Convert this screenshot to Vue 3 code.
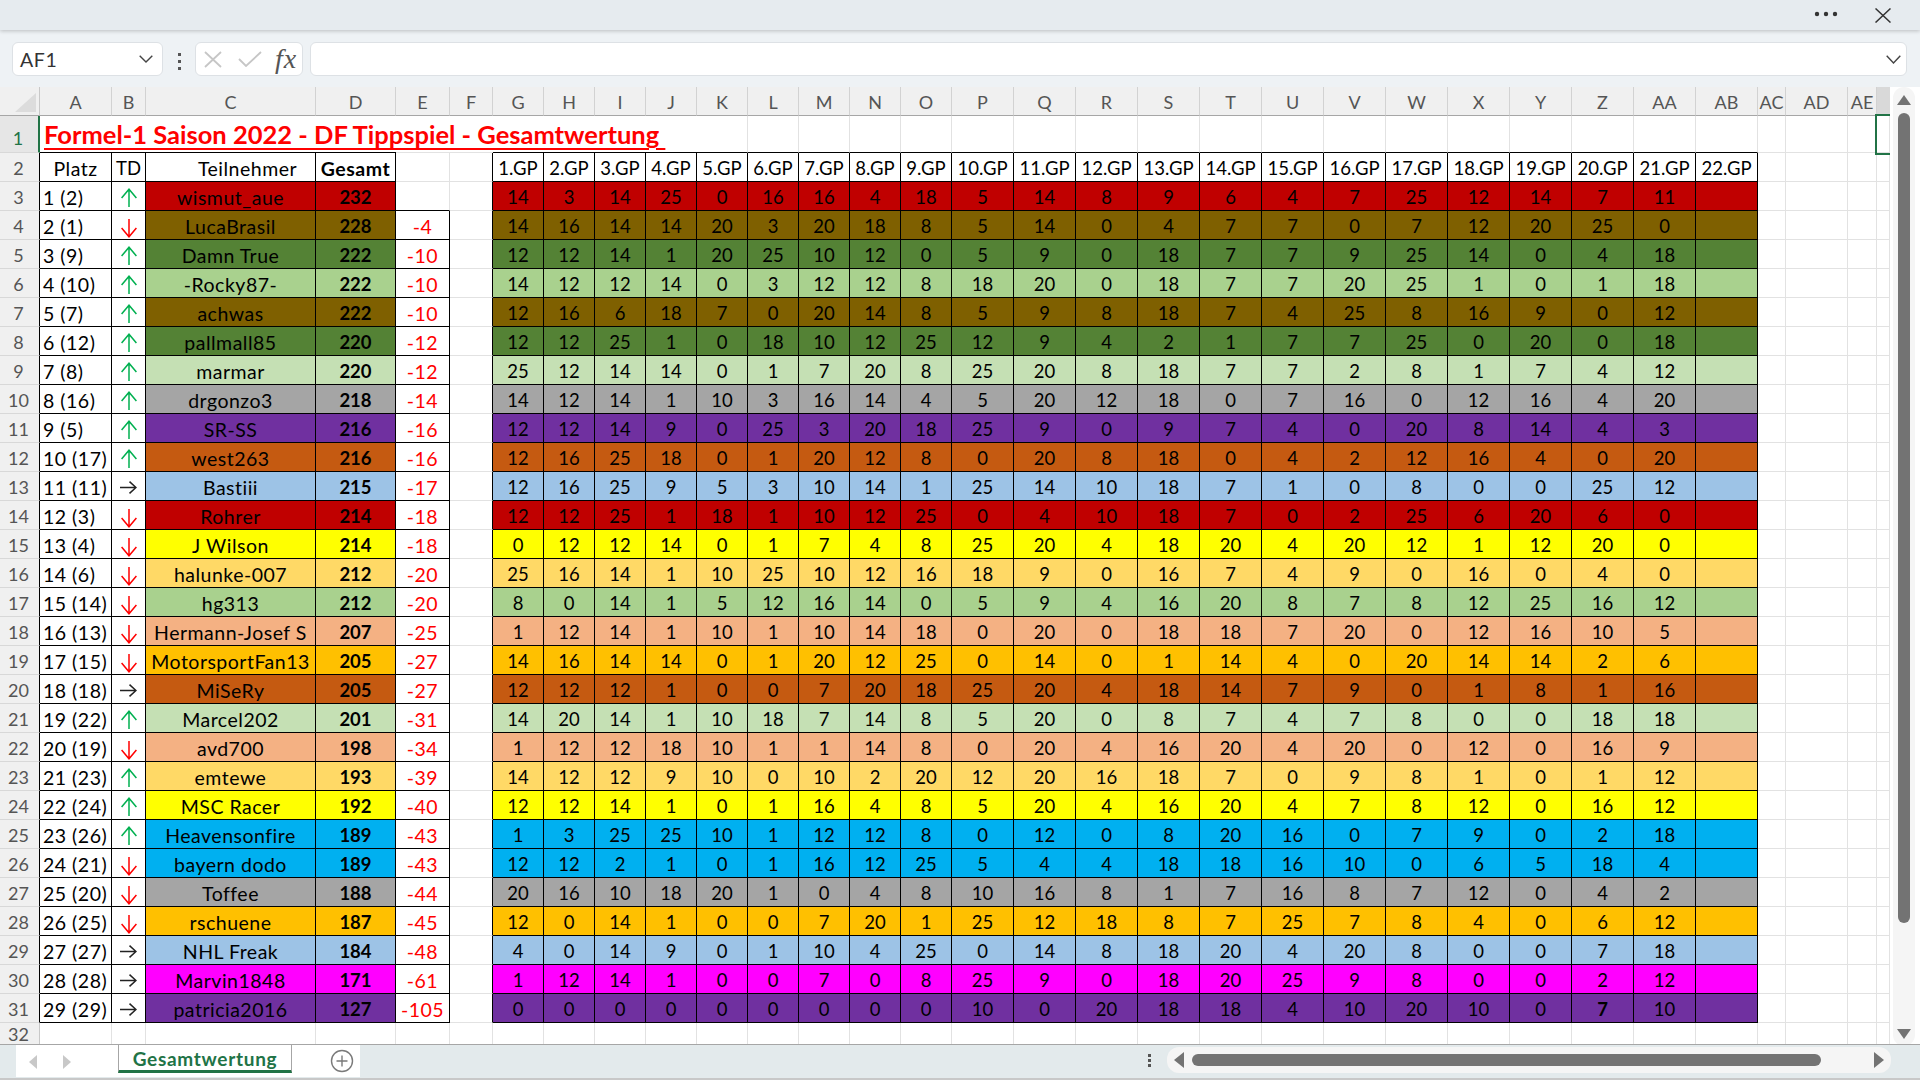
<template>
  <div class="app">
    <div class="topbar">
      <svg class="more" width="24" height="6" viewBox="0 0 24 6"><circle cx="3" cy="3" r="2.2" /><circle cx="12" cy="3" r="2.2" /><circle cx="21" cy="3" r="2.2" /></svg>
      <svg class="close" width="16" height="15" viewBox="0 0 16 15"><path d="M0.5 0.5 L15.5 14.5 M15.5 0.5 L0.5 14.5" /></svg>
    </div>

    <div class="formula-row">
      <div class="name-box">
        <span>AF1</span>
        <svg width="14" height="8" viewBox="0 0 14 8"><path d="M0.7 0.7 L7 7 L13.3 0.7" /></svg>
      </div>
      <div class="grip"><i></i><i></i><i></i></div>
      <div class="fx-box">
        <svg class="fx-x" width="18" height="17" viewBox="0 0 18 17"><path d="M1 1 L17 16 M17 1 L1 16" /></svg>
        <svg class="fx-ok" width="24" height="16" viewBox="0 0 24 16"><path d="M1 8 L8 15 L23 1" /></svg>
        <span class="fx">fx</span>
      </div>
      <div class="formula-input">
        <svg width="15" height="9" viewBox="0 0 15 9"><path d="M0.7 0.7 L7.5 8 L14.3 0.7" /></svg>
      </div>
    </div>

    <div class="sheet-wrap">
      <div class="sheet">
        <div class="head corner">
          <svg width="21" height="19" viewBox="0 0 21 19"><path d="M21 0 V19 H0 Z" /></svg>
        </div>
        <div v-for="col in columns" :key="col" class="head col-head">{{ col }}</div>
        <div class="head col-head col-sel"></div>

        <div class="head row-head row-sel">1</div>
        <div class="cell title-cell bottom-black no-right">
          <span class="title">Formel-1 Saison 2022 - DF Tippspiel - Gesamtwertung&nbsp;</span>
        </div>
        <div v-for="(col, i) in columns.slice(1)" :key="'t' + col" class="cell" :class="titleRowClass(i + 1)"></div>
        <div class="cell selected"></div>

        <div class="head row-head black-edge">2</div>
        <div class="cell boxed center wide">Platz</div>
        <div class="cell boxed center">TD</div>
        <div class="cell boxed center wide name-head">Teilnehmer</div>
        <div class="cell boxed center bold wide">Gesamt</div>
        <div class="cell"></div>
        <div class="cell right-black"></div>
        <div v-for="n in 22" :key="'gp' + n" class="cell boxed center">{{ n }}.GP</div>
        <div v-for="n in 4" :key="'e2' + n" class="cell"></div>

        <template v-for="(row, r) in rows" :key="row.name">
          <div class="head row-head black-edge">{{ r + 3 }}</div>
          <div class="cell boxed place wide">{{ row.place }}</div>
          <div class="cell boxed center">
            <svg v-if="row.td === 'up'" class="arrow up" width="16" height="19" viewBox="0 0 16 19"><path d="M8 19 V1.2 M0.6 10 L8 1.2 L15.4 10" /></svg>
            <svg v-else-if="row.td === 'down'" class="arrow down" width="16" height="19" viewBox="0 0 16 19"><path d="M8 0 V17.8 M0.6 9 L8 17.8 L15.4 9" /></svg>
            <svg v-else class="arrow same" width="17" height="13" viewBox="0 0 17 13"><path d="M0 6.5 H16 M9.5 0.6 L16 6.5 L9.5 12.4" /></svg>
          </div>
          <div class="cell boxed center wide" :class="row.color">{{ row.name }}</div>
          <div class="cell boxed center bold" :class="row.color">{{ row.total }}</div>
          <div class="cell center diff wide" :class="r === 0 ? 'bottom-black' : 'boxed'">{{ row.diff }}</div>
          <div class="cell right-black"></div>
          <div
            v-for="(pts, g) in row.scores"
            :key="g"
            class="cell boxed center"
            :class="[row.color, { bold: row.name === 'patricia2016' && g === 19 }]"
          >{{ pts }}</div>
          <div class="cell boxed" :class="row.color"></div>
          <div v-for="n in 4" :key="'e' + n" class="cell"></div>
        </template>

        <div class="head row-head">32</div>
        <div v-for="col in columns" :key="'l' + col" class="cell"></div>
        <div class="cell"></div>
      </div>

      <div class="vscroll">
        <svg width="14" height="10" viewBox="0 0 14 10"><path d="M7 0 L14 10 H0 Z" /></svg>
        <div class="vthumb"></div>
        <svg width="14" height="10" viewBox="0 0 14 10"><path d="M7 10 L14 0 H0 Z" /></svg>
      </div>
    </div>

    <div class="tabbar">
      <div class="tab-strip">
        <div class="tab-nav">
          <svg width="8" height="14" viewBox="0 0 8 14"><path d="M8 0 V14 L0 7 Z" /></svg>
          <svg width="8" height="14" viewBox="0 0 8 14"><path d="M0 0 V14 L8 7 Z" /></svg>
        </div>
        <div class="tab">Gesamtwertung</div>
        <svg class="add" width="24" height="24" viewBox="0 0 24 24"><circle cx="12" cy="12" r="10.5" /><path d="M12 6.5 V17.5 M6.5 12 H17.5" /></svg>
      </div>
      <div class="tab-grip"><i></i><i></i><i></i></div>
      <div class="hscroll">
        <svg width="10" height="16" viewBox="0 0 10 16"><path d="M10 0 V16 L0 8 Z" /></svg>
        <div class="hthumb"></div>
        <svg width="10" height="16" viewBox="0 0 10 16"><path d="M0 0 V16 L10 8 Z" /></svg>
      </div>
    </div>
    <div class="bottom-line"></div>
  </div>
</template>

<script setup>
const columns = [
  'A', 'B', 'C', 'D', 'E', 'F', 'G', 'H', 'I', 'J', 'K', 'L', 'M', 'N', 'O', 'P',
  'Q', 'R', 'S', 'T', 'U', 'V', 'W', 'X', 'Y', 'Z', 'AA', 'AB', 'AC', 'AD', 'AE'
]

// place | trend | name | total | diff | colour | points per GP
const raw = [
  ['1 (2)', 'up', 'wismut_aue', 232, '', 'red', '14 3 14 25 0 16 16 4 18 5 14 8 9 6 4 7 25 12 14 7 11'],
  ['2 (1)', 'down', 'LucaBrasil', 228, -4, 'brown', '14 16 14 14 20 3 20 18 8 5 14 0 4 7 7 0 7 12 20 25 0'],
  ['3 (9)', 'up', 'Damn True', 222, -10, 'forest', '12 12 14 1 20 25 10 12 0 5 9 0 18 7 7 9 25 14 0 4 18'],
  ['4 (10)', 'up', '-Rocky87-', 222, -10, 'green', '14 12 12 14 0 3 12 12 8 18 20 0 18 7 7 20 25 1 0 1 18'],
  ['5 (7)', 'up', 'achwas', 222, -10, 'brown', '12 16 6 18 7 0 20 14 8 5 9 8 18 7 4 25 8 16 9 0 12'],
  ['6 (12)', 'up', 'pallmall85', 220, -12, 'forest', '12 12 25 1 0 18 10 12 25 12 9 4 2 1 7 7 25 0 20 0 18'],
  ['7 (8)', 'up', 'marmar', 220, -12, 'pale', '25 12 14 14 0 1 7 20 8 25 20 8 18 7 7 2 8 1 7 4 12'],
  ['8 (16)', 'up', 'drgonzo3', 218, -14, 'grey', '14 12 14 1 10 3 16 14 4 5 20 12 18 0 7 16 0 12 16 4 20'],
  ['9 (5)', 'up', 'SR-SS', 216, -16, 'purple', '12 12 14 9 0 25 3 20 18 25 9 0 9 7 4 0 20 8 14 4 3'],
  ['10 (17)', 'up', 'west263', 216, -16, 'rust', '12 16 25 18 0 1 20 12 8 0 20 8 18 0 4 2 12 16 4 0 20'],
  ['11 (11)', 'same', 'Bastiii', 215, -17, 'sky', '12 16 25 9 5 3 10 14 1 25 14 10 18 7 1 0 8 0 0 25 12'],
  ['12 (3)', 'down', 'Rohrer', 214, -18, 'red', '12 12 25 1 18 1 10 12 25 0 4 10 18 7 0 2 25 6 20 6 0'],
  ['13 (4)', 'down', 'J Wilson', 214, -18, 'yellow', '0 12 12 14 0 1 7 4 8 25 20 4 18 20 4 20 12 1 12 20 0'],
  ['14 (6)', 'down', 'halunke-007', 212, -20, 'sand', '25 16 14 1 10 25 10 12 16 18 9 0 16 7 4 9 0 16 0 4 0'],
  ['15 (14)', 'down', 'hg313', 212, -20, 'green', '8 0 14 1 5 12 16 14 0 5 9 4 16 20 8 7 8 12 25 16 12'],
  ['16 (13)', 'down', 'Hermann-Josef S', 207, -25, 'salmon', '1 12 14 1 10 1 10 14 18 0 20 0 18 18 7 20 0 12 16 10 5'],
  ['17 (15)', 'down', 'MotorsportFan13', 205, -27, 'amber', '14 16 14 14 0 1 20 12 25 0 14 0 1 14 4 0 20 14 14 2 6'],
  ['18 (18)', 'same', 'MiSeRy', 205, -27, 'rust', '12 12 12 1 0 0 7 20 18 25 20 4 18 14 7 9 0 1 8 1 16'],
  ['19 (22)', 'up', 'Marcel202', 201, -31, 'pale', '14 20 14 1 10 18 7 14 8 5 20 0 8 7 4 7 8 0 0 18 18'],
  ['20 (19)', 'down', 'avd700', 198, -34, 'salmon', '1 12 12 18 10 1 1 14 8 0 20 4 16 20 4 20 0 12 0 16 9'],
  ['21 (23)', 'up', 'emtewe', 193, -39, 'sand', '14 12 12 9 10 0 10 2 20 12 20 16 18 7 0 9 8 1 0 1 12'],
  ['22 (24)', 'up', 'MSC Racer', 192, -40, 'yellow', '12 12 14 1 0 1 16 4 8 5 20 4 16 20 4 7 8 12 0 16 12'],
  ['23 (26)', 'up', 'Heavensonfire', 189, -43, 'cyan', '1 3 25 25 10 1 12 12 8 0 12 0 8 20 16 0 7 9 0 2 18'],
  ['24 (21)', 'down', 'bayern dodo', 189, -43, 'cyan', '12 12 2 1 0 1 16 12 25 5 4 4 18 18 16 10 0 6 5 18 4'],
  ['25 (20)', 'down', 'Toffee', 188, -44, 'grey', '20 16 10 18 20 1 0 4 8 10 16 8 1 7 16 8 7 12 0 4 2'],
  ['26 (25)', 'down', 'rschuene', 187, -45, 'amber', '12 0 14 1 0 0 7 20 1 25 12 18 8 7 25 7 8 4 0 6 12'],
  ['27 (27)', 'same', 'NHL Freak', 184, -48, 'sky', '4 0 14 9 0 1 10 4 25 0 14 8 18 20 4 20 8 0 0 7 18'],
  ['28 (28)', 'same', 'Marvin1848', 171, -61, 'magenta', '1 12 14 1 0 0 7 0 8 25 9 0 18 20 25 9 8 0 0 2 12'],
  ['29 (29)', 'same', 'patricia2016', 127, -105, 'purple', '0 0 0 0 0 0 0 0 0 10 0 20 18 18 4 10 20 10 0 7 10']
]

const rows = raw.map(([place, td, name, total, diff, color, pts]) => ({
  place, td, name, total, diff, color, scores: pts.split(' ')
}))

// row 1: the title runs over A to J, so those cells have no lines of their own
function titleRowClass(i) {
  const list = []
  if (i <= 9) list.push('no-right')
  if (i <= 3 || (i >= 6 && i <= 27)) list.push('bottom-black')
  return list
}
</script>

<style>
html, body {
  margin: 0;
  background: #fff;
}
</style>

<style scoped>
.app {
  width: 1920px;
  height: 1080px;
  display: flex;
  flex-direction: column;
  overflow: hidden;
  font-family: Lato, "Liberation Sans", sans-serif;
  color: #000;
  background: #eef2f5;
}

.topbar {
  height: 30px;
  flex: none;
  display: flex;
  align-items: center;
  justify-content: flex-end;
  background: #e6ebef;
  box-shadow: 0 1px 4px rgba(0, 0, 0, 0.22);
  position: relative;
}
.more {
  fill: #333;
  margin-right: 37px;
  margin-top: -3px;
}
.close {
  fill: none;
  stroke: #333;
  stroke-width: 1.5;
  margin-right: 29px;
}

.formula-row {
  height: 57px;
  flex: none;
  display: flex;
  align-items: flex-start;
  padding: 12px 13px 0 12px;
  box-sizing: border-box;
}
.name-box,
.fx-box,
.formula-input {
  height: 34px;
  box-sizing: border-box;
  background: #fff;
  border: 1px solid #dde1e5;
  border-radius: 6px;
  display: flex;
  align-items: center;
}
.name-box {
  width: 151px;
  padding: 0 9px 0 7px;
  justify-content: space-between;
  font-size: 19.5px;
  letter-spacing: 0.6px;
  color: #333;
}
.name-box svg,
.formula-input svg {
  fill: none;
  stroke: #444;
  stroke-width: 1.4;
}
.grip {
  width: 32px;
  display: flex;
  flex-direction: column;
  align-items: center;
  gap: 4px;
  padding-top: 11px;
}
.grip i,
.tab-grip i {
  display: block;
  width: 3px;
  height: 3px;
  background: #555;
}
.fx-box {
  width: 108px;
  padding-left: 8px;
}
.fx-x,
.fx-ok {
  fill: none;
  stroke: #c6c6c6;
  stroke-width: 1.8;
}
.fx-ok {
  margin-left: 16px;
}
.fx {
  margin-left: 13px;
  font-family: "Liberation Serif", serif;
  font-style: italic;
  font-size: 28px;
  line-height: 30px;
  letter-spacing: 1px;
  color: #555;
}
.formula-input {
  flex: 1;
  margin-left: 7px;
  justify-content: flex-end;
  padding-right: 5px;
}

.sheet-wrap {
  height: 958px;
  flex: none;
  display: flex;
  background: #fff;
}
.sheet {
  width: 1890px;
  flex: none;
  display: grid;
  grid-template-columns: 40px 72px 34px 170px 80px 54px 43px repeat(9, 51px) repeat(13, 62px) 28px 62px 29px 13px;
  grid-template-rows: 29px 37px repeat(30, 29px) 22px;
  overflow: hidden;
  font-size: 18.5px;
}

.head {
  background: #f0f0f0;
  color: #555;
  display: flex;
  align-items: center;
  justify-content: center;
  box-sizing: border-box;
  font-size: 18px;
}
.corner {
  border-right: 1px solid #c8c8c8;
  border-bottom: 1px solid #a6a6a6;
  justify-content: flex-start;
  align-items: flex-start;
  padding: 6px 0 0 15px;
}
.corner svg {
  fill: #dcdcdc;
}
.col-head {
  border-right: 1px solid #d2d2d2;
  border-bottom: 1px solid #a6a6a6;
  padding-top: 2px;
}
.col-sel {
  background: #d9d9d9;
  border-right: 0;
}
.row-head {
  border-right: 1px solid #c8c8c8;
  border-bottom: 1px solid #d8d8d8;
  padding: 1px 2px 0 0;
}
.row-sel {
  background: #e6e6e6;
  color: #217346;
  border-right: 2px solid #217346;
  padding-top: 7px;
}
.black-edge {
  border-right: 1px solid #000;
}

.cell {
  position: relative;
  box-sizing: border-box;
  display: flex;
  align-items: center;
  white-space: nowrap;
  border-right: 1px solid #e2e2e2;
  border-bottom: 1px solid #e2e2e2;
  padding-top: 2px;
  min-width: 0;
}
.center {
  justify-content: center;
}
.bold {
  font-weight: 700;
}
/* the first columns of the sheet run wider than the GP points */
.wide {
  font-size: 19.5px;
  letter-spacing: 0.5px;
}
.boxed {
  border-right: 1px solid #000;
  border-bottom: 1px solid #000;
}
.place {
  padding-left: 3px;
}
.name-head {
  padding-left: 34px;
}
.no-right {
  border-right: 0;
}
.bottom-black {
  border-bottom: 1px solid #000;
}
.right-black {
  border-right: 1px solid #000;
}
.diff {
  color: #f00;
}
.title-cell {
  padding: 0 0 0 4px;
  z-index: 1;
}
.title {
  font-size: 25.5px;
  font-weight: 700;
  color: #f00;
  text-decoration: underline;
  text-decoration-thickness: 2px;
  text-underline-offset: 4px;
}
.selected {
  z-index: 2;
  outline: 2px solid #217346;
}

.arrow {
  fill: none;
  stroke-width: 1.5;
}
.up {
  stroke: #00b050;
  margin-top: 1px;
}
.down {
  stroke: #f00;
  margin-top: 4px;
}
.same {
  stroke: #222;
  margin-top: 1px;
}

.red { background: #c00000; }
.brown { background: #7f6000; }
.forest { background: #548235; }
.green { background: #a9d18e; }
.pale { background: #c5e0b4; }
.grey { background: #a5a5a5; }
.purple { background: #7030a0; }
.rust { background: #c55a11; }
.sky { background: #9dc3e6; }
.yellow { background: #ffff00; }
.sand { background: #ffd966; }
.salmon { background: #f4b183; }
.amber { background: #ffc000; }
.cyan { background: #00b0f0; }
.magenta { background: #ff00ff; }

.vscroll {
  flex: none;
  width: 22px;
  height: 959px;
  margin-left: 3px;
  box-sizing: border-box;
  padding: 8px 4px 7px;
  background: #f5f5f5;
  border-radius: 11px;
  display: flex;
  flex-direction: column;
  align-items: center;
  fill: #737373;
}
.vthumb {
  width: 12px;
  height: 810px;
  margin: 8px 0 106px;
  background: #737373;
  border-radius: 6px;
}

.tabbar {
  flex: 1;
  display: flex;
  align-items: flex-start;
  background: #e3eaec;
  border-top: 1px solid #a6a6a6;
  box-sizing: border-box;
  margin-top: -1px;
  position: relative;
}
.tab-strip {
  margin-left: 16px;
  width: 344px;
  height: 32px;
  background: #fff;
  display: flex;
  align-items: flex-start;
  fill: #c8c8c8;
}
.tab-nav {
  width: 102px;
  flex: none;
  height: 32px;
  display: flex;
  justify-content: flex-start;
  gap: 26px;
  padding: 10px 0 0 13px;
  box-sizing: border-box;
}
.tab {
  width: 174px;
  height: 29px;
  flex: none;
  box-sizing: border-box;
  margin-top: -1px;
  padding-top: 2px;
  text-align: center;
  background: #fff;
  border-left: 1px solid #a6a6a6;
  border-right: 1px solid #a6a6a6;
  border-top: 1px solid #a6a6a6;
  border-bottom: 3px solid #217346;
  font-weight: 700;
  font-size: 19px;
  letter-spacing: 0.7px;
  line-height: 24px;
  color: #217346;
}
.add {
  margin: 4px 0 0 38px;
  fill: none;
  stroke: #7a7a7a;
  stroke-width: 1.4;
}
.tab-grip {
  margin-left: 788px;
  padding-top: 9px;
  width: 4px;
  display: flex;
  flex-direction: column;
  gap: 2px;
}
.hscroll {
  position: absolute;
  left: 1167px;
  top: 2px;
  width: 724px;
  height: 26px;
  box-sizing: border-box;
  background: #f5f5f5;
  border-radius: 12px;
  display: flex;
  align-items: center;
  padding: 0 7px;
  fill: #737373;
}
.hthumb {
  width: 629px;
  height: 12px;
  margin: 0 53px 0 8px;
  background: #737373;
  border-radius: 6px;
}
.bottom-line {
  height: 2px;
  flex: none;
  background: #c8c8c8;
}
</style>
